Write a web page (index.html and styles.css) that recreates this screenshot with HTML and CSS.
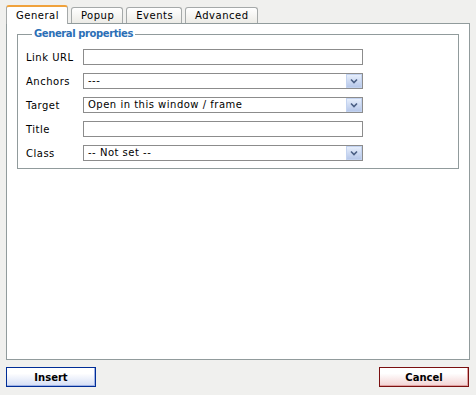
FILE: index.html
```html
<!DOCTYPE html>
<html>
<head>
  <meta charset="UTF-8">
  <title>Insert/edit link</title>
  <link rel="stylesheet" href="styles.css">
</head>
<body>
  <div class="dialog">
    <!-- Tab strip -->
    <div class="tabs">
      <span class="tab current">General</span>
      <span class="tab">Popup</span>
      <span class="tab">Events</span>
      <span class="tab">Advanced</span>
    </div>

    <div class="panel">
      <fieldset>
        <legend>General properties</legend>
        <div class="form">
          <label>Link URL</label>
          <div class="field"></div>

          <label>Anchors</label>
          <div class="field select">
            <span class="value">---</span>
            <span class="arrow"><svg width="8" height="6" viewBox="0 0 8 6"><path d="M1 1.5 L4 4.5 L7 1.5" fill="none" stroke="#4b5f84" stroke-width="1.6"/></svg></span>
          </div>

          <label>Target</label>
          <div class="field select">
            <span class="value">Open in this window / frame</span>
            <span class="arrow"><svg width="8" height="6" viewBox="0 0 8 6"><path d="M1 1.5 L4 4.5 L7 1.5" fill="none" stroke="#4b5f84" stroke-width="1.6"/></svg></span>
          </div>

          <label>Title</label>
          <div class="field"></div>

          <label>Class</label>
          <div class="field select">
            <span class="value">-- Not set --</span>
            <span class="arrow"><svg width="8" height="6" viewBox="0 0 8 6"><path d="M1 1.5 L4 4.5 L7 1.5" fill="none" stroke="#4b5f84" stroke-width="1.6"/></svg></span>
          </div>
        </div>
      </fieldset>
    </div>

    <div class="buttons">
      <button class="btn insert">Insert</button>
      <button class="btn cancel">Cancel</button>
    </div>
  </div>
</body>
</html>
```

FILE: styles.css
```css
* {
  margin: 0;
  padding: 0;
  box-sizing: border-box;
}
body {
  font-family: 'DejaVu Sans', Verdana, sans-serif;
  font-size: 10px;
  letter-spacing: 0.5px;
  color: #000;
  background: #f0f0ee;
}
.dialog {
  padding: 5px 6px 0 6px;
  width: 476px;
  height: 395px;
}

/* Tabs */
.tabs {
  display: flex;
  align-items: flex-end;
  gap: 3px;
  height: 18px;
}
.tab {
  height: 16px;
  padding: 0 8px 0 9px;
  line-height: 15px;
  border: 1px solid #a5a9a9;
  border-bottom: none;
  border-radius: 3px 3px 0 0;
  background: linear-gradient(#ffffff, #ecebe6);
  color: #000;
}
.tab.current {
  position: relative;
  height: 19px;
  margin-bottom: -1px;
  line-height: 17px;
  background: #fff;
  border-top: 2px solid #f0a23c;
  border-color: #f0a23c #a5a9a9 #fff #a5a9a9;
  z-index: 1;
}

/* Panel */
.panel {
  height: 337px;
  border: 1px solid #919b9c;
  background: #fff;
  padding: 4px 10px;
}
fieldset {
  border: 1px solid #919b9c;
  padding: 9px 8px 7px 8px;
}
legend {
  font-weight: bold;
  letter-spacing: -0.4px;
  color: #2b6fb6;
  padding: 0 2px;
  margin-left: 6px;
  line-height: 12px;
}
.form {
  display: grid;
  grid-template-columns: 57px 280px;
  row-gap: 8px;
  align-items: center;
}
.field {
  height: 16px;
  border: 1px solid #8c8c8c;
  background: #fff;
}
.select {
  display: flex;
  align-items: center;
  justify-content: space-between;
  padding-left: 4px;
}
.select .value {
  line-height: 14px;
}
.arrow {
  width: 16px;
  height: 14px;
  display: flex;
  align-items: center;
  justify-content: center;
  border: 1px solid #c3d3f0;
  background: linear-gradient(#e6eefc, #b7c8ea);
}

/* Buttons */
.buttons {
  display: flex;
  justify-content: space-between;
  margin-top: 7px;
  padding-right: 1px;
}
.btn {
  width: 90px;
  height: 20px;
  font-family: 'DejaVu Sans', Verdana, sans-serif;
  font-size: 10px;
  font-weight: bold;
  letter-spacing: 0;
  color: #000;
  cursor: pointer;
}
.insert {
  border: 1px solid #002d96;
  background: linear-gradient(#ffffff 30%, #d3ddf5);
  box-shadow: inset -1px -1px 0 #9fb2e6;
}
.cancel {
  border: 1px solid #7a1010;
  background: linear-gradient(#ffffff 30%, #f2d2d2);
  box-shadow: inset -1px -1px 0 #e0a0a0;
}
```
